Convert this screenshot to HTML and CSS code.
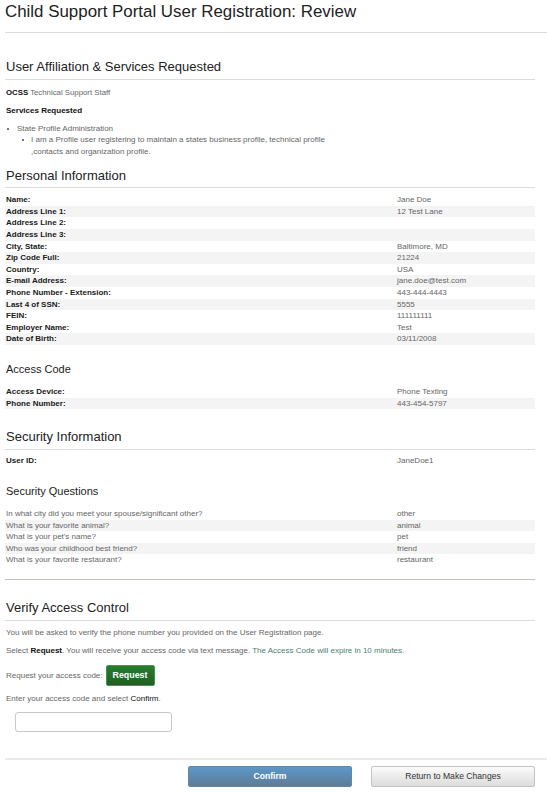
FILE: index.html
```html
<!DOCTYPE html>
<html lang="en">
<head>
<meta charset="utf-8">
<title>Child Support Portal User Registration: Review</title>
<link rel="stylesheet" href="styles.css">
</head>
<body>
<div class="page">
  <h1 class="title">Child Support Portal User Registration: Review</h1>
  <div class="title-rule"></div>

  <div class="content">
    <h2 class="section-head first">User Affiliation &amp; Services Requested</h2>
    <p class="affil"><b>OCSS</b> Technical Support Staff</p>
    <p class="svc-title">Services Requested</p>
    <ul class="services">
      <li class="svc"><span class="bullet"></span><span>State Profile Administration</span></li>
      <li class="svc sub"><span class="bullet"></span><span>I am a Profile user registering to maintain a states business profile, technical profile<br>,contacts and organization profile.</span></li>
    </ul>

    <h2 class="section-head personal">Personal Information</h2>
    <div class="rows personal-rows">
      <div class="row"><span class="lbl">Name:</span><span class="val">Jane Doe</span></div>
      <div class="row alt"><span class="lbl">Address Line 1:</span><span class="val">12 Test Lane</span></div>
      <div class="row"><span class="lbl">Address Line 2:</span><span class="val"></span></div>
      <div class="row alt"><span class="lbl">Address Line 3:</span><span class="val"></span></div>
      <div class="row"><span class="lbl">City, State:</span><span class="val">Baltimore, MD</span></div>
      <div class="row alt"><span class="lbl">Zip Code Full:</span><span class="val">21224</span></div>
      <div class="row"><span class="lbl">Country:</span><span class="val">USA</span></div>
      <div class="row alt"><span class="lbl">E-mail Address:</span><span class="val">jane.doe@test.com</span></div>
      <div class="row"><span class="lbl">Phone Number - Extension:</span><span class="val">443-444-4443</span></div>
      <div class="row alt"><span class="lbl">Last 4 of SSN:</span><span class="val">5555</span></div>
      <div class="row"><span class="lbl">FEIN:</span><span class="val">111111111</span></div>
      <div class="row"><span class="lbl">Employer Name:</span><span class="val">Test</span></div>
      <div class="row alt"><span class="lbl">Date of Birth:</span><span class="val">03/11/2008</span></div>
    </div>

    <h3 class="sub-head access">Access Code</h3>
    <div class="rows sub-rows">
      <div class="row"><span class="lbl">Access Device:</span><span class="val">Phone Texting</span></div>
      <div class="row alt"><span class="lbl">Phone Number:</span><span class="val">443-454-5797</span></div>
    </div>

    <h2 class="section-head security">Security Information</h2>
    <div class="rows userid-rows">
      <div class="row"><span class="lbl">User ID:</span><span class="val">JaneDoe1</span></div>
    </div>

    <h3 class="sub-head questions">Security Questions</h3>
    <div class="rows sub-rows">
      <div class="row"><span class="q">In what city did you meet your spouse/significant other?</span><span class="val">other</span></div>
      <div class="row alt"><span class="q">What is your favorite animal?</span><span class="val">animal</span></div>
      <div class="row"><span class="q">What is your pet's name?</span><span class="val">pet</span></div>
      <div class="row alt"><span class="q">Who was your childhood best friend?</span><span class="val">friend</span></div>
      <div class="row"><span class="q">What is your favorite restaurant?</span><span class="val">restaurant</span></div>
    </div>

    <div class="divider"></div>

    <h2 class="section-head verify">Verify Access Control</h2>
    <p class="note first-note">You will be asked to verify the phone number you provided on the User Registration page.</p>
    <p class="note">Select <b>Request</b>. You will receive your access code via text message. <span class="expire">The Access Code will expire in 10 minutes.</span></p>
    <div class="request-row">
      <span class="note-inline">Request your access code:</span>
      <button class="btn-request" type="button">Request</button>
    </div>
    <p class="note enter">Enter your access code and select <span class="dark">Confirm</span>.</p>
    <input class="code-input" type="text" aria-label="Access code">
  </div>

  <div class="footer-rule"></div>
  <div class="actions">
    <button class="btn-confirm" type="button">Confirm</button>
    <button class="btn-return" type="button">Return to Make Changes</button>
  </div>
</div>
</body>
</html>
```

FILE: styles.css
```css
* { box-sizing: border-box; }

html, body {
  margin: 0;
  padding: 0;
  background: #ffffff;
}

body {
  font-family: "Liberation Sans", Arial, sans-serif;
  color: #333;
  width: 547px;
  height: 796px;
  overflow: hidden;
}

.page {
  display: flex;
  flex-direction: column;
}

.title {
  margin: 2px 0 0 5px;
  font-size: 16.9px;
  line-height: 20px;
  font-weight: normal;
  color: #222;
}

.title-rule {
  margin: 10px 0 0 5px;
  height: 1px;
  background: #dcdcdc;
}

.content {
  width: 530px;
  margin-left: 5px;
  display: flex;
  flex-direction: column;
}

.section-head {
  margin: 0;
  font-size: 13px;
  line-height: 15px;
  font-weight: normal;
  color: #222;
  padding: 0 0 4.5px 1px;
  border-bottom: 1px solid #dcdcdc;
}

.section-head.first { margin-top: 25.5px; padding-bottom: 5.5px; }
.section-head.personal { margin-top: 10.75px; }
.section-head.security { margin-top: 20.1px; }
.section-head.verify { margin-top: 20.5px; }

.sub-head {
  margin: 0;
  font-size: 11px;
  line-height: 13px;
  font-weight: normal;
  color: #222;
  padding-left: 1px;
}

.sub-head.access { margin-top: 18.5px; }
.sub-head.questions { margin-top: 18.7px; }

.affil, .svc-title {
  margin: 0;
  font-size: 7.8px;
  line-height: 11px;
  padding-left: 1px;
  color: #666;
}

.affil { margin-top: 6.5px; }
.affil b { color: #111; }

.svc-title {
  margin-top: 7px;
  font-size: 8px;
  font-weight: bold;
  color: #111;
}

.services {
  list-style: none;
  margin: 7px 0 0;
  padding: 0;
  font-size: 8px;
  line-height: 11.5px;
  color: #666;
}

.svc {
  display: flex;
  align-items: flex-start;
  padding-left: 2px;
}

.svc.sub { padding-left: 17px; }

.bullet {
  flex: none;
  width: 2px;
  height: 2px;
  margin: 5px 8px 0 0;
  background: #777;
}

.svc.sub .bullet { margin-right: 7px; }

.rows {
  display: flex;
  flex-direction: column;
  font-size: 8px;
  line-height: 11.6px;
}

.personal-rows { margin-top: 6px; }
.sub-rows { margin-top: 9.7px; }
.userid-rows { margin-top: 5.2px; }

.row {
  display: grid;
  grid-template-columns: 391px 1fr;
  padding-left: 1px;
  height: 11.6px;
}

.row.alt { background: #f4f4f4; }

.lbl {
  font-weight: bold;
  color: #1a1a1a;
}

.q { color: #666; }

.val { color: #666; }

.divider {
  margin-top: 12.8px;
  height: 1px;
  background: #c9c2ba;
}

.note {
  margin: 7px 0 0;
  padding-left: 1px;
  font-size: 8px;
  line-height: 11px;
  color: #666;
}

.note.first-note { margin-top: 6.5px; }

.note b { color: #111; }
.note .dark { color: #111; }

.expire { color: #4a7f73; }

.request-row {
  margin-top: 8.5px;
  display: flex;
  align-items: center;
  gap: 3px;
  padding-left: 1px;
  height: 21px;
}

.note-inline {
  font-size: 8px;
  color: #666;
}

.btn-request {
  width: 49px;
  height: 21px;
  padding: 0;
  border: 1px solid #3f9a45;
  border-radius: 2px;
  background: linear-gradient(#2a7a32, #1f5f25);
  color: #fff;
  font-family: "Liberation Sans", Arial, sans-serif;
  font-size: 8.9px;
  font-weight: bold;
}

.note.enter { margin-top: 7.5px; }

.code-input {
  margin: 7.5px 0 0 10px;
  width: 157px;
  height: 20px;
  border: 1px solid #c8c8c8;
  border-radius: 3px;
  background: #fff;
  padding: 0 4px;
}

.footer-rule {
  margin: 26px 0 0 5px;
  height: 2px;
  background: #ebebeb;
}

.actions {
  margin-top: 6px;
  width: 535px;
  display: flex;
  justify-content: flex-end;
  gap: 19px;
}

.btn-confirm, .btn-return {
  width: 164px;
  height: 21px;
  padding: 0;
  border-radius: 2px;
  font-family: "Liberation Sans", Arial, sans-serif;
  font-size: 8.6px;
}

.btn-confirm {
  border: 1px solid #5f88ad;
  background: linear-gradient(#5c98c8, #5f7b98);
  color: #fff;
  font-weight: bold;
}

.btn-return {
  border: 1px solid #c3c3c3;
  background: linear-gradient(#fbfbfb, #dcdcdc);
  color: #333;
}
```
